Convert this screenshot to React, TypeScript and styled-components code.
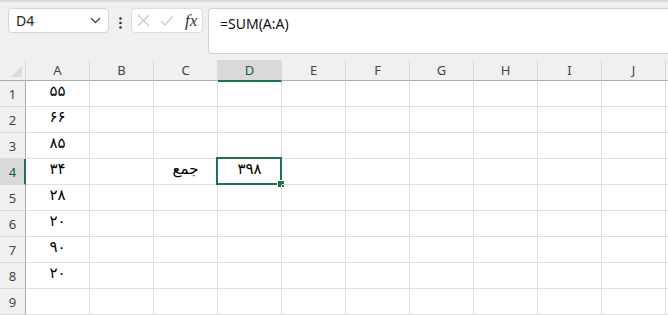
import { Fragment } from "react";
import styled, { createGlobalStyle } from "styled-components";

const GlobalStyle = createGlobalStyle`
  html, body {
    margin: 0;
    padding: 0;
    background: #f0f0f0;
    font-family: "Segoe UI", "Noto Sans", "DejaVu Sans", sans-serif;
    overflow: hidden;
  }
`;

const columns = ["A", "B", "C", "D", "E", "F", "G", "H", "I", "J", "K"];
const selectedCol = "D";
const selectedRow = 4;

const data: Record<string, string> = {
  A1: "۵۵",
  A2: "۶۶",
  A3: "۸۵",
  A4: "۳۴",
  A5: "۲۸",
  A6: "۲۰",
  A7: "۹۰",
  A8: "۲۰",
  C4: "جمع",
  D4: "۳۹۸",
};

const Page = styled.div`
  width: 668px;
  height: 315px;
  border-top: 2px solid #dadada;
  box-sizing: border-box;
  overflow: hidden;
`;

const FormulaBar = styled.div`
  display: flex;
  align-items: flex-start;
  height: 58px;
  padding-top: 6px;
  box-sizing: border-box;
`;

const NameBox = styled.div`
  margin-left: 8px;
  width: 101px;
  height: 25px;
  box-sizing: border-box;
  background: #fff;
  border: 1px solid #d4d4d4;
  border-radius: 4px;
  display: flex;
  align-items: center;
  justify-content: space-between;
  padding: 0 7px 0 7px;
  font-size: 14px;
  color: #222;
`;

const Dots = styled.div`
  width: 22px;
  display: flex;
  justify-content: center;
  padding-top: 9px;
`;

const FnBox = styled.div`
  width: 72px;
  height: 25px;
  box-sizing: border-box;
  background: #fff;
  border: 1px solid #dcdcdc;
  border-radius: 4px;
  display: flex;
  align-items: center;
  gap: 10px;
  padding-left: 5px;
`;

const Fx = styled.span`
  font-family: "Liberation Serif", "DejaVu Serif", serif;
  font-style: italic;
  font-size: 17px;
  color: #333;
  margin-left: 1px;
`;

const FormulaInput = styled.div`
  margin-left: 5px;
  flex: 1;
  height: 46px;
  box-sizing: border-box;
  background: #fff;
  border: 1px solid #d0d0d0;
  border-right: none;
  border-radius: 4px 0 0 4px;
  padding: 5px 0 0 11px;
  font-size: 14px;
  color: #111;
`;

const Grid = styled.div`
  display: grid;
  grid-template-columns: 26px repeat(11, 64px);
  grid-auto-rows: 26px;
  grid-template-rows: 21px;
  background: #fff;
`;

const Corner = styled.div`
  background: #f0f0f0;
  border-right: 1px solid #d8d8d8;
  border-bottom: 1px solid #ababab;
  position: relative;
`;

const CornerTriangle = styled.div`
  position: absolute;
  right: 3px;
  bottom: 3px;
  width: 0;
  height: 0;
  border-left: 11px solid transparent;
  border-bottom: 11px solid #dcdcdc;
`;

const ColHead = styled.div<{ $active?: boolean }>`
  background: ${({ $active }) => ($active ? "#d9d9d9" : "#f0f0f0")};
  border-right: 1px solid #dadada;
  border-bottom: ${({ $active }) =>
    $active ? "2px solid #217346" : "1px solid #ababab"};
  margin-bottom: ${({ $active }) => ($active ? "-1px" : "0")};
  display: flex;
  align-items: center;
  justify-content: center;
  font-size: 13px;
  color: ${({ $active }) => ($active ? "#1b5e3a" : "#444")};
  position: relative;
  z-index: 1;
`;

const RowHead = styled.div<{ $active?: boolean }>`
  background: ${({ $active }) => ($active ? "#d9d9d9" : "#f0f0f0")};
  border-right: ${({ $active }) =>
    $active ? "2px solid #217346" : "1px solid #ababab"};
  border-bottom: 1px solid #dadada;
  display: flex;
  align-items: flex-end;
  justify-content: center;
  padding-bottom: 3px;
  padding-left: ${({ $active }) => ($active ? "1px" : "0")};
  box-sizing: border-box;
  font-size: 13px;
  color: ${({ $active }) => ($active ? "#1b5e3a" : "#444")};
`;

const Cell = styled.div`
  border-right: 1px solid #dedede;
  border-bottom: 1px solid #dedede;
  display: flex;
  align-items: flex-end;
  justify-content: center;
  padding-bottom: 6px;
  box-sizing: border-box;
  font-family: "DejaVu Sans", sans-serif;
  font-size: 15px;
  color: #000;
  position: relative;
`;

const Selection = styled.div`
  position: absolute;
  left: -2px;
  top: -2px;
  right: -1px;
  bottom: -1px;
  border: 2px solid #217346;
  pointer-events: none;
`;

const Handle = styled.div`
  position: absolute;
  right: -5px;
  bottom: -5px;
  width: 6px;
  height: 6px;
  background: #217346;
  border: 1px solid #fff;
`;

const Chevron = () => (
  <svg width="11" height="7" viewBox="0 0 11 7">
    <path d="M1 1l4.5 4.5L10 1" fill="none" stroke="#444" strokeWidth="1.3" />
  </svg>
);

const VDots = () => (
  <svg width="3" height="12" viewBox="0 0 3 12">
    <circle cx="1.5" cy="1.5" r="1.3" fill="#333" />
    <circle cx="1.5" cy="6" r="1.3" fill="#333" />
    <circle cx="1.5" cy="10.5" r="1.3" fill="#333" />
  </svg>
);

const Cross = () => (
  <svg width="13" height="13" viewBox="0 0 13 13">
    <path d="M1 1l11 11M12 1L1 12" stroke="#c6c6c6" strokeWidth="1.2" />
  </svg>
);

const Check = () => (
  <svg width="14" height="11" viewBox="0 0 14 11">
    <path d="M1 6l4 4 8-9" fill="none" stroke="#c6c6c6" strokeWidth="1.2" />
  </svg>
);

const rows = [1, 2, 3, 4, 5, 6, 7, 8, 9];

const App = () => {
  return (
    <Page>
      <GlobalStyle />
      <FormulaBar>
        <NameBox>
          <span>D4</span>
          <Chevron />
        </NameBox>
        <Dots>
          <VDots />
        </Dots>
        <FnBox>
          <Cross />
          <Check />
          <Fx>fx</Fx>
        </FnBox>
        <FormulaInput>=SUM(A:A)</FormulaInput>
      </FormulaBar>
      <Grid>
        <Corner>
          <CornerTriangle />
        </Corner>
        {columns.map((c) => (
          <ColHead key={c} $active={c === selectedCol}>
            {c === "K" ? "" : c}
          </ColHead>
        ))}
        {rows.map((r) => (
          <Fragment key={r}>
            <RowHead $active={r === selectedRow}>{r}</RowHead>
            {columns.map((c) => {
              const id = `${c}${r}`;
              const active = c === selectedCol && r === selectedRow;
              return (
                <Cell key={id}>
                  {data[id]}
                  {active && (
                    <Selection>
                      <Handle />
                    </Selection>
                  )}
                </Cell>
              );
            })}
          </Fragment>
        ))}
      </Grid>
    </Page>
  );
};

export default App;
